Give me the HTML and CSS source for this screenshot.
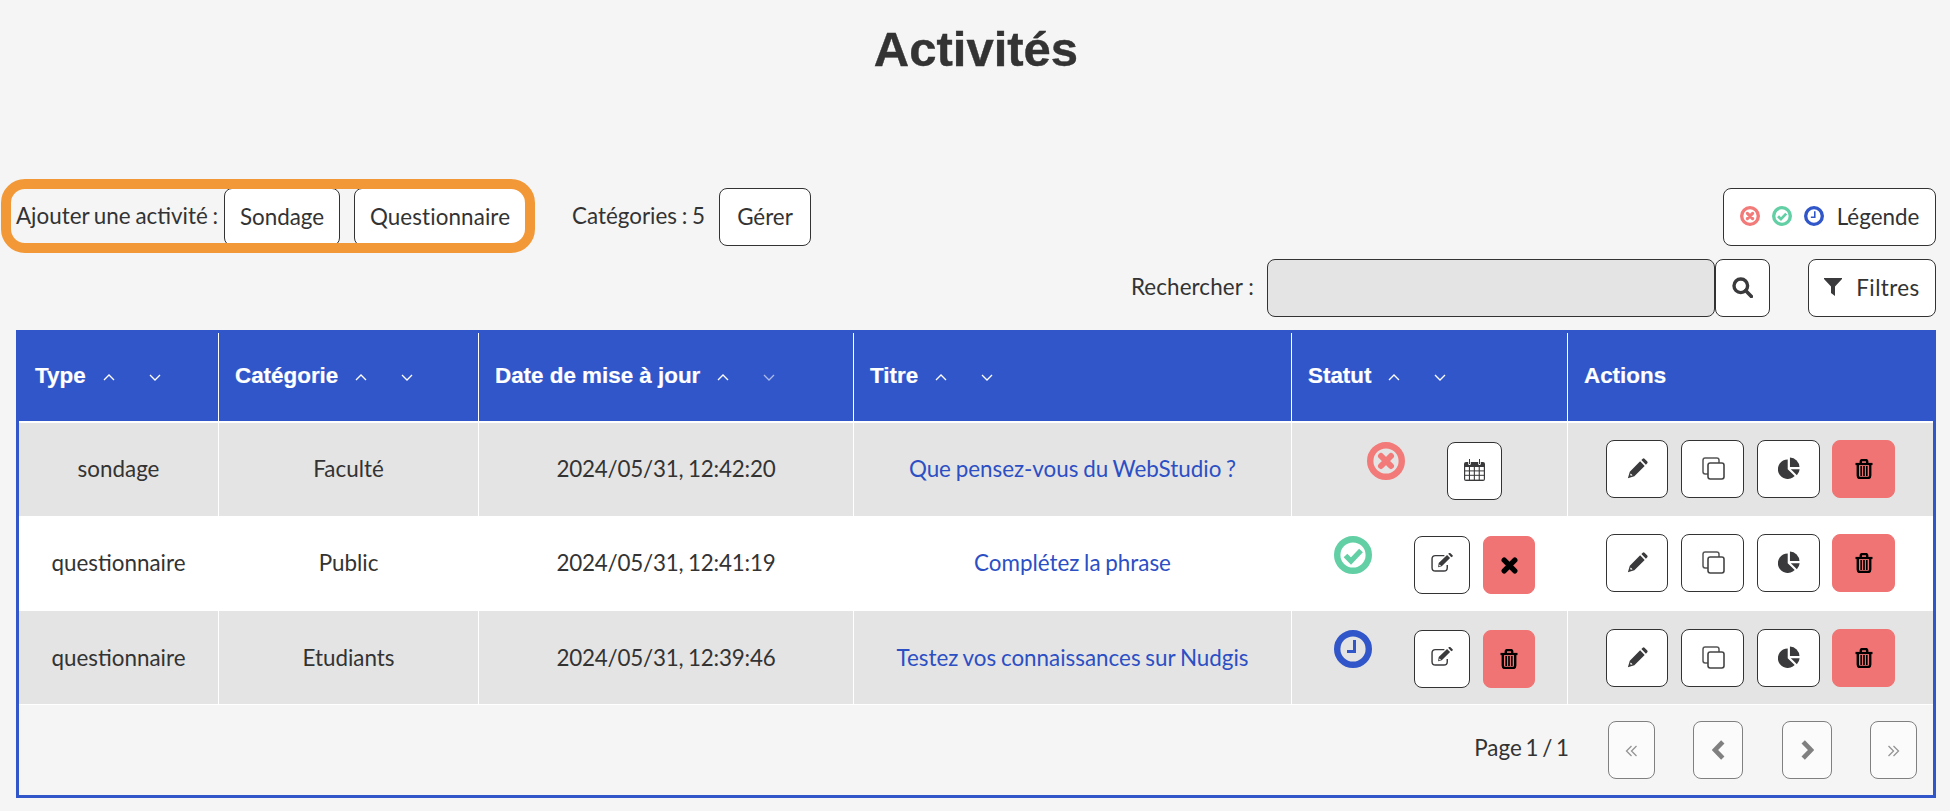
FILE: index.html
```html
<!DOCTYPE html>
<html lang="fr">
<head>
<meta charset="utf-8">
<title>Activités</title>
<link rel="stylesheet" href="styles.css">
</head>
<body>
<svg class="sprite" aria-hidden="true">
  <symbol id="st-x" viewBox="0 0 38 38"><circle cx="19" cy="19" r="15.8" fill="none" stroke="currentColor" stroke-width="6.4"/><path d="M14 14L24 24M24 14L14 24" stroke="currentColor" stroke-width="6" stroke-linecap="round"/></symbol>
  <symbol id="st-ok" viewBox="0 0 38 38"><circle cx="19" cy="19" r="15.8" fill="none" stroke="currentColor" stroke-width="6.4"/><path d="M11.5 19.5L17 25L27 14.5" fill="none" stroke="currentColor" stroke-width="5.2"/></symbol>
  <symbol id="st-clock" viewBox="0 0 38 38"><circle cx="19" cy="19" r="15.8" fill="none" stroke="currentColor" stroke-width="6.4"/><path d="M20.5 10V21.5H13" fill="none" stroke="currentColor" stroke-width="3"/></symbol>
  <symbol id="i-pencil" viewBox="0 0 24 24"><path fill="#3a3a3c" d="M3.2 15.6L15 3.8L20.2 9L8.4 20.8L1 23ZM16.4 2.4L18 .8Q19 0 20 .8L23.2 4Q24 5 23.2 6L21.6 7.6Z"/><path fill="#fff" d="M4.2 17.6L6.4 19.8L4.6 20.4L3.6 19.4Z"/></symbol>
  <symbol id="i-copy" viewBox="0 0 23 23"><rect x="1" y="1" width="16" height="16" rx="2.2" fill="none" stroke="#555" stroke-width="1.5"/><rect x="6" y="6" width="16" height="16" rx="2.2" fill="#fff" stroke="#444" stroke-width="1.6"/></symbol>
  <symbol id="i-pie" viewBox="0 0 24 24"><path fill="#3a3a3c" d="M10.6 13.4V2.6A10.7 10.7 0 1 0 18.2 20.8Z"/><path fill="#3a3a3c" d="M13 .6A10.6 10.6 0 0 1 23.4 11H13Z"/><path fill="#3a3a3c" d="M14 13.4H23.6A10.6 10.6 0 0 1 20.6 19.8Z"/></symbol>
  <symbol id="i-trash" viewBox="0 0 18 20"><path d="M.5 5H17.5" stroke="currentColor" stroke-width="2.2" fill="none"/><path d="M5.8 5V2.6Q5.8 1 7.4 1H10.6Q12.2 1 12.2 2.6V5M2.8 5V16.6Q2.8 19 5 19H13Q15.2 19 15.2 16.6V5" stroke="currentColor" stroke-width="2.4" fill="none"/><path d="M6.2 7V17M9 7V17M11.8 7V17" stroke="currentColor" stroke-width="1.7" fill="none"/></symbol>
  <symbol id="i-edit" viewBox="0 0 24 20"><path d="M17 12.5V15.5Q17 19 13.5 19H4.5Q1 19 1 15.5V6Q1 2.8 4.5 2.8H14" fill="none" stroke="#3a3a3c" stroke-width="1.5"/><path fill="#3a3a3c" d="M8 10.5L16.8 2L20 5.2L11.2 14L7.4 15ZM18 .8L19 0Q19.8-.3 20.4.2L22.6 2.4Q23.2 3 22.6 3.8L21.2 4.4Z"/><path fill="#fff" d="M9 12L10.4 13.4L9 14L8.4 13.4Z"/></symbol>
  <symbol id="i-cal" viewBox="0 0 21 22"><path fill="#3a3a3c" d="M2 3H19Q21 3 21 5V20Q21 22 19 22H2Q0 22 0 20V5Q0 3 2 3Z"/><g fill="#fff"><rect x="4.2" y="1" width="2.6" height="5" rx="1.3"/><rect x="14.2" y="1" width="2.6" height="5" rx="1.3"/><rect x="1.2" y="8" width="3.7" height="3.4"/><rect x="6" y="8" width="3.8" height="3.4"/><rect x="10.9" y="8" width="3.8" height="3.4"/><rect x="15.8" y="8" width="4" height="3.4"/><rect x="1.2" y="12.4" width="3.7" height="3.4"/><rect x="6" y="12.4" width="3.8" height="3.4"/><rect x="10.9" y="12.4" width="3.8" height="3.4"/><rect x="15.8" y="12.4" width="4" height="3.4"/><rect x="1.2" y="16.8" width="3.7" height="3.8"/><rect x="6" y="16.8" width="3.8" height="3.8"/><rect x="10.9" y="16.8" width="3.8" height="3.8"/><rect x="15.8" y="16.8" width="4" height="3.8"/></g><path d="M5.5 0V5M15.5 0V5" stroke="#3a3a3c" stroke-width="1"/></symbol>
  <symbol id="i-times" viewBox="0 0 16 16"><path d="M3 3L13 13M13 3L3 13" stroke="#000" stroke-width="5" stroke-linecap="round"/></symbol>
  <symbol id="i-up" viewBox="0 0 12 7"><path d="M1 6L6 1L11 6" fill="none" stroke="currentColor" stroke-width="1.3"/></symbol>
  <symbol id="i-down" viewBox="0 0 12 7"><path d="M1 1L6 6L11 1" fill="none" stroke="currentColor" stroke-width="1.3"/></symbol>
</svg>

<h1 class="title">Activités</h1>

<div class="toolbar">
  <div class="add-group">
    <span>Ajouter une activité :</span>
    <button class="btn w116">Sondage</button>
    <button class="btn w172">Questionnaire</button>
    <span class="highlight"></span>
  </div>
  <span class="cat-label">Catégories : 5</span>
  <button class="btn w92">Gérer</button>
  <button class="btn btn-legend">
    <svg class="ico-20 c-red"><use href="#st-x"/></svg>
    <svg class="ico-20 c-green"><use href="#st-ok"/></svg>
    <svg class="ico-20 c-blue"><use href="#st-clock"/></svg>
    <span class="legend-text">Légende</span>
  </button>
</div>

<div class="searchbar">
  <label class="search-label">Rechercher :</label>
  <input class="search-input" type="text">
  <button class="btn btn-search"><svg class="ico-lens" viewBox="0 0 21 21"><circle cx="8.8" cy="8.8" r="6.8" fill="none" stroke="#3a3a3c" stroke-width="3.4"/><path d="M13.6 13.6L19.4 19.4" stroke="#3a3a3c" stroke-width="3.6" stroke-linecap="round"/></svg></button>
  <button class="btn btn-filter"><svg class="ico-funnel" viewBox="0 0 18 18"><path fill="#3a3a3c" d="M0 0H18V1L11 8.5V18L7 15V8.5L0 1Z"/></svg><span class="filter-text">Filtres</span></button>
</div>

<div class="frame">
  <table class="grid">
    <colgroup>
      <col class="w1"><col class="w2"><col class="w3"><col class="w4"><col class="w5"><col class="w6">
    </colgroup>
    <thead>
      <tr>
        <th><div class="th"><span>Type</span><svg class="sort up"><use href="#i-up"/></svg><svg class="sort"><use href="#i-down"/></svg></div></th>
        <th><div class="th"><span>Catégorie</span><svg class="sort up"><use href="#i-up"/></svg><svg class="sort"><use href="#i-down"/></svg></div></th>
        <th><div class="th"><span>Date de mise à jour</span><svg class="sort up"><use href="#i-up"/></svg><svg class="sort dim"><use href="#i-down"/></svg></div></th>
        <th><div class="th"><span>Titre</span><svg class="sort up"><use href="#i-up"/></svg><svg class="sort"><use href="#i-down"/></svg></div></th>
        <th><div class="th"><span>Statut</span><svg class="sort up"><use href="#i-up"/></svg><svg class="sort"><use href="#i-down"/></svg></div></th>
        <th><div class="th"><span>Actions</span></div></th>
      </tr>
    </thead>
    <tbody>
      <tr class="row-a">
        <td>sondage</td><td>Faculté</td><td class="date">2024/05/31, 12:42:20</td>
        <td><a class="link" href="#">Que pensez-vous du WebStudio ?</a></td>
        <td class="st-cell"><div class="status"><svg class="ico-38 c-red"><use href="#st-x"/></svg><button class="btn sq w55"><svg class="ico-cal"><use href="#i-cal"/></svg></button></div></td>
        <td class="ac-cell"><div class="actions">
          <button class="btn a62"><svg class="ico-pencil"><use href="#i-pencil"/></svg></button>
          <button class="btn a63"><svg class="ico-copy"><use href="#i-copy"/></svg></button>
          <button class="btn a63"><svg class="ico-pie"><use href="#i-pie"/></svg></button>
          <button class="btn a63 danger"><svg class="ico-trash"><use href="#i-trash"/></svg></button>
        </div></td>
      </tr>
      <tr class="row-b">
        <td>questionnaire</td><td>Public</td><td class="date">2024/05/31, 12:41:19</td>
        <td><a class="link" href="#">Complétez la phrase</a></td>
        <td class="st-cell"><div class="status"><svg class="ico-38 c-green"><use href="#st-ok"/></svg><button class="btn sq w56"><svg class="ico-edit"><use href="#i-edit"/></svg></button><button class="btn sq w52 danger"><svg class="ico-times"><use href="#i-times"/></svg></button></div></td>
        <td class="ac-cell"><div class="actions">
          <button class="btn a62"><svg class="ico-pencil"><use href="#i-pencil"/></svg></button>
          <button class="btn a63"><svg class="ico-copy"><use href="#i-copy"/></svg></button>
          <button class="btn a63"><svg class="ico-pie"><use href="#i-pie"/></svg></button>
          <button class="btn a63 danger"><svg class="ico-trash"><use href="#i-trash"/></svg></button>
        </div></td>
      </tr>
      <tr class="row-a row-c">
        <td>questionnaire</td><td>Etudiants</td><td class="date">2024/05/31, 12:39:46</td>
        <td><a class="link" href="#">Testez vos connaissances sur Nudgis</a></td>
        <td class="st-cell"><div class="status"><svg class="ico-38 c-blue"><use href="#st-clock"/></svg><button class="btn sq w56"><svg class="ico-edit"><use href="#i-edit"/></svg></button><button class="btn sq w52 danger"><svg class="ico-trash"><use href="#i-trash"/></svg></button></div></td>
        <td class="ac-cell"><div class="actions">
          <button class="btn a62"><svg class="ico-pencil"><use href="#i-pencil"/></svg></button>
          <button class="btn a63"><svg class="ico-copy"><use href="#i-copy"/></svg></button>
          <button class="btn a63"><svg class="ico-pie"><use href="#i-pie"/></svg></button>
          <button class="btn a63 danger"><svg class="ico-trash"><use href="#i-trash"/></svg></button>
        </div></td>
      </tr>
    </tbody>
  </table>
  <div class="pager">
    <span class="page-text">Page 1 / 1</span>
    <button class="btn pg w47"><svg class="ico-dbl" viewBox="0 0 13 12"><path d="M6.5 1L1.5 6L6.5 11M11.5 1L6.5 6L11.5 11" fill="none" stroke="#555" stroke-width="1.3"/></svg></button>
    <button class="btn pg w50"><svg class="ico-chev" viewBox="0 0 13 20"><path d="M10.8 1.8L3 10L10.8 18.2" fill="none" stroke="#333" stroke-width="4.6"/></svg></button>
    <button class="btn pg w50"><svg class="ico-chev" viewBox="0 0 13 20"><path d="M2.2 1.8L10 10L2.2 18.2" fill="none" stroke="#333" stroke-width="4.6"/></svg></button>
    <button class="btn pg w47"><svg class="ico-dbl" viewBox="0 0 13 12"><path d="M1.5 1L6.5 6L1.5 11M6.5 1L11.5 6L6.5 11" fill="none" stroke="#555" stroke-width="1.3"/></svg></button>
  </div>
</div>
</body>
</html>
```

FILE: styles.css
```css
* { box-sizing: border-box; }
html, body { margin: 0; padding: 0; }
body {
  background: #f5f5f5;
  color: #333;
  font-family: "Lato", sans-serif;
  font-size: 22.4px;
  line-height: 26px;
  word-spacing: -1px;
  padding: 0 14px 0 16px;
  height: 811px;
  overflow: hidden;
}
.sprite { width: 0; height: 0; position: absolute; }

.title {
  margin: 0;
  height: 188px;
  padding-top: 21px;
  text-align: center;
  font-family: "Liberation Sans", Arial, sans-serif;
  font-size: 49px;
  line-height: 56px;
  font-weight: 700;
  color: #333;
  -webkit-text-stroke: .4px #333;
}

.btn {
  height: 58px;
  padding: 0 17px;
  background: #fff;
  border: 1px solid #333;
  border-radius: 8px;
  color: #333;
  font-family: "Lato", sans-serif;
  font-size: 22.4px;
  display: inline-flex;
  align-items: center;
  justify-content: center;
  flex: none;
}
.btn svg { flex: none; }
.toolbar .btn, .searchbar .btn { padding-bottom: 2px; }
.w116 { width: 116px; padding-left: 0; padding-right: 0; }
.w172 { width: 172px; padding-left: 0; padding-right: 0; margin-left: 1px; letter-spacing: .1px; }
.w92 { width: 92px; padding-left: 0; padding-right: 0; }

.toolbar {
  display: flex;
  align-items: center;
  height: 58px;
  margin-bottom: 13px;
}
.add-group {
  position: relative;
  display: flex;
  align-items: center;
  width: 510px;
  gap: 13px;
}
.add-group > span:first-child { flex: none; width: 208px; margin-right: -13px; white-space: nowrap; margin-top: -2px; }
.highlight {
  position: absolute;
  left: -15px;
  top: -9px;
  width: 534px;
  height: 74px;
  border: 10px solid #f29836;
  border-radius: 24px;
  pointer-events: none;
}
.cat-label { margin-left: 46px; margin-right: 14px; white-space: nowrap; margin-top: -2px; }
.btn-legend { margin-left: auto; width: 213px; gap: 12px; padding-left: 0; padding-right: 0; }
.legend-text { margin-left: 1px; }
.ico-20 { width: 20px; height: 20px; }
.ico-38 { width: 38px; height: 38px; flex: none; }
.c-red { color: #f27a78; }
.c-green { color: #62cfa5; }
.c-blue { color: #3056c9; }

.searchbar {
  display: flex;
  align-items: center;
  justify-content: flex-end;
  height: 58px;
  margin-bottom: 13px;
}
.search-label { margin-right: 13px; margin-top: -2px; word-spacing: 0; letter-spacing: .1px; }
.search-input {
  width: 448px;
  height: 58px;
  background: #e4e4e4;
  border: 1px solid #333;
  border-radius: 8px;
}
.btn-search { width: 55px; padding-left: 0; padding-right: 0; margin-right: 38px; }
.ico-lens { width: 21px; height: 21px; }
.btn-filter { width: 128px; gap: 14px; padding-left: 0; padding-right: 0; }
.filter-text { letter-spacing: .4px; }
.ico-funnel { width: 18px; height: 18px; }

.frame {
  width: 1920px;
  height: 468px;
  border: 3px solid #3056c9;
}
.grid {
  width: 1914px;
  table-layout: fixed;
  border-collapse: separate;
  border-spacing: 0;
}
.w1 { width: 200px; }
.w2 { width: 260px; }
.w3 { width: 375px; }
.w4 { width: 438px; }
.w5 { width: 276px; }
.w6 { width: 365px; }

.grid th {
  height: 90px;
  padding: 0 0 0 16px;
  background: #3056c9;
  color: #fff;
  text-align: left;
  border-right: 1px solid #fff;
  border-bottom: 2px solid #fff;
  font-family: "Liberation Sans", Arial, sans-serif;
  font-size: 22.4px;
  font-weight: 700;
  word-spacing: 0;
  -webkit-text-stroke: .2px #fff;
}
.grid th:last-child { border-right: 0; }
.th { display: flex; align-items: center; padding-bottom: 3px; }
.sort { width: 12px; height: 7px; color: #fff; margin-top: 3px; }
.sort.up { margin-left: 17px; margin-right: 34px; }
.sort.dim { opacity: .6; }

.grid td {
  padding: 0 0 2px;
  text-align: center;
  border-right: 1px solid #fff;
  border-bottom: 0;
  background: #fff;
}
.grid td:last-child { border-right: 0; }
.grid .date { letter-spacing: -.2px; }
.row-a td { background: #e4e4e4; }
.row-a { height: 93px; }
.row-b { height: 95px; }
.grid .row-c td { border-bottom: 1px solid #fff; padding-bottom: 0; }
.row-c { height: 94px; }

.link { color: #2c4fc4; text-decoration: none; }

.grid .st-cell, .grid .ac-cell { vertical-align: top; }
.status {
  display: flex;
  justify-content: center;
  align-items: flex-start;
  padding: 19px 0 0 10px;
}
.row-b .status { padding-top: 20px; }
.status .ico-38 { margin-right: 42px; }
.sq { padding: 0; }
.w55 { width: 55px; }
.w56 { width: 56px; margin-right: 13px; }
.w52 { width: 52px; }
.actions {
  display: flex;
  justify-content: center;
  gap: 13px;
  padding-top: 17px;
}
.row-b .actions, .row-c .actions { padding-top: 18px; }
.a62 { width: 62px; padding: 0; }
.a63 { width: 63px; padding: 0; }
.actions .danger { margin-left: -1px; }
.danger { background: #f07473; border-color: #f07473; color: #000; }

.ico-pencil { width: 21px; height: 21px; margin-bottom: 1px; }
.ico-copy { width: 23px; height: 23px; margin: 0 0 2px 1px; }
.ico-pie { width: 22px; height: 22px; margin-bottom: 3px; }
.ico-trash { width: 18px; height: 20px; margin-bottom: 1px; }
.ico-edit { width: 23px; height: 19px; margin-bottom: 5px; }
.ico-cal { width: 21px; height: 22px; margin-bottom: 2px; }
.ico-times { width: 17px; height: 17px; }

.pager {
  display: flex;
  align-items: flex-start;
  justify-content: flex-end;
  padding: 16px 16px 0 0;
}
.page-text { margin-right: 39px; line-height: 54px; word-spacing: -2px; }
.pg {
  padding: 0;
  opacity: .6;
  background: #fff;
  margin-left: 38px;
}
.page-text + .pg { margin-left: 0; }
.w50 + .w50 { margin-left: 39px; }
.w47 { width: 47px; }
.w50 { width: 50px; }
.ico-dbl { width: 13px; height: 12px; margin-top: 2px; }
.ico-chev { width: 13px; height: 20px; }
```
